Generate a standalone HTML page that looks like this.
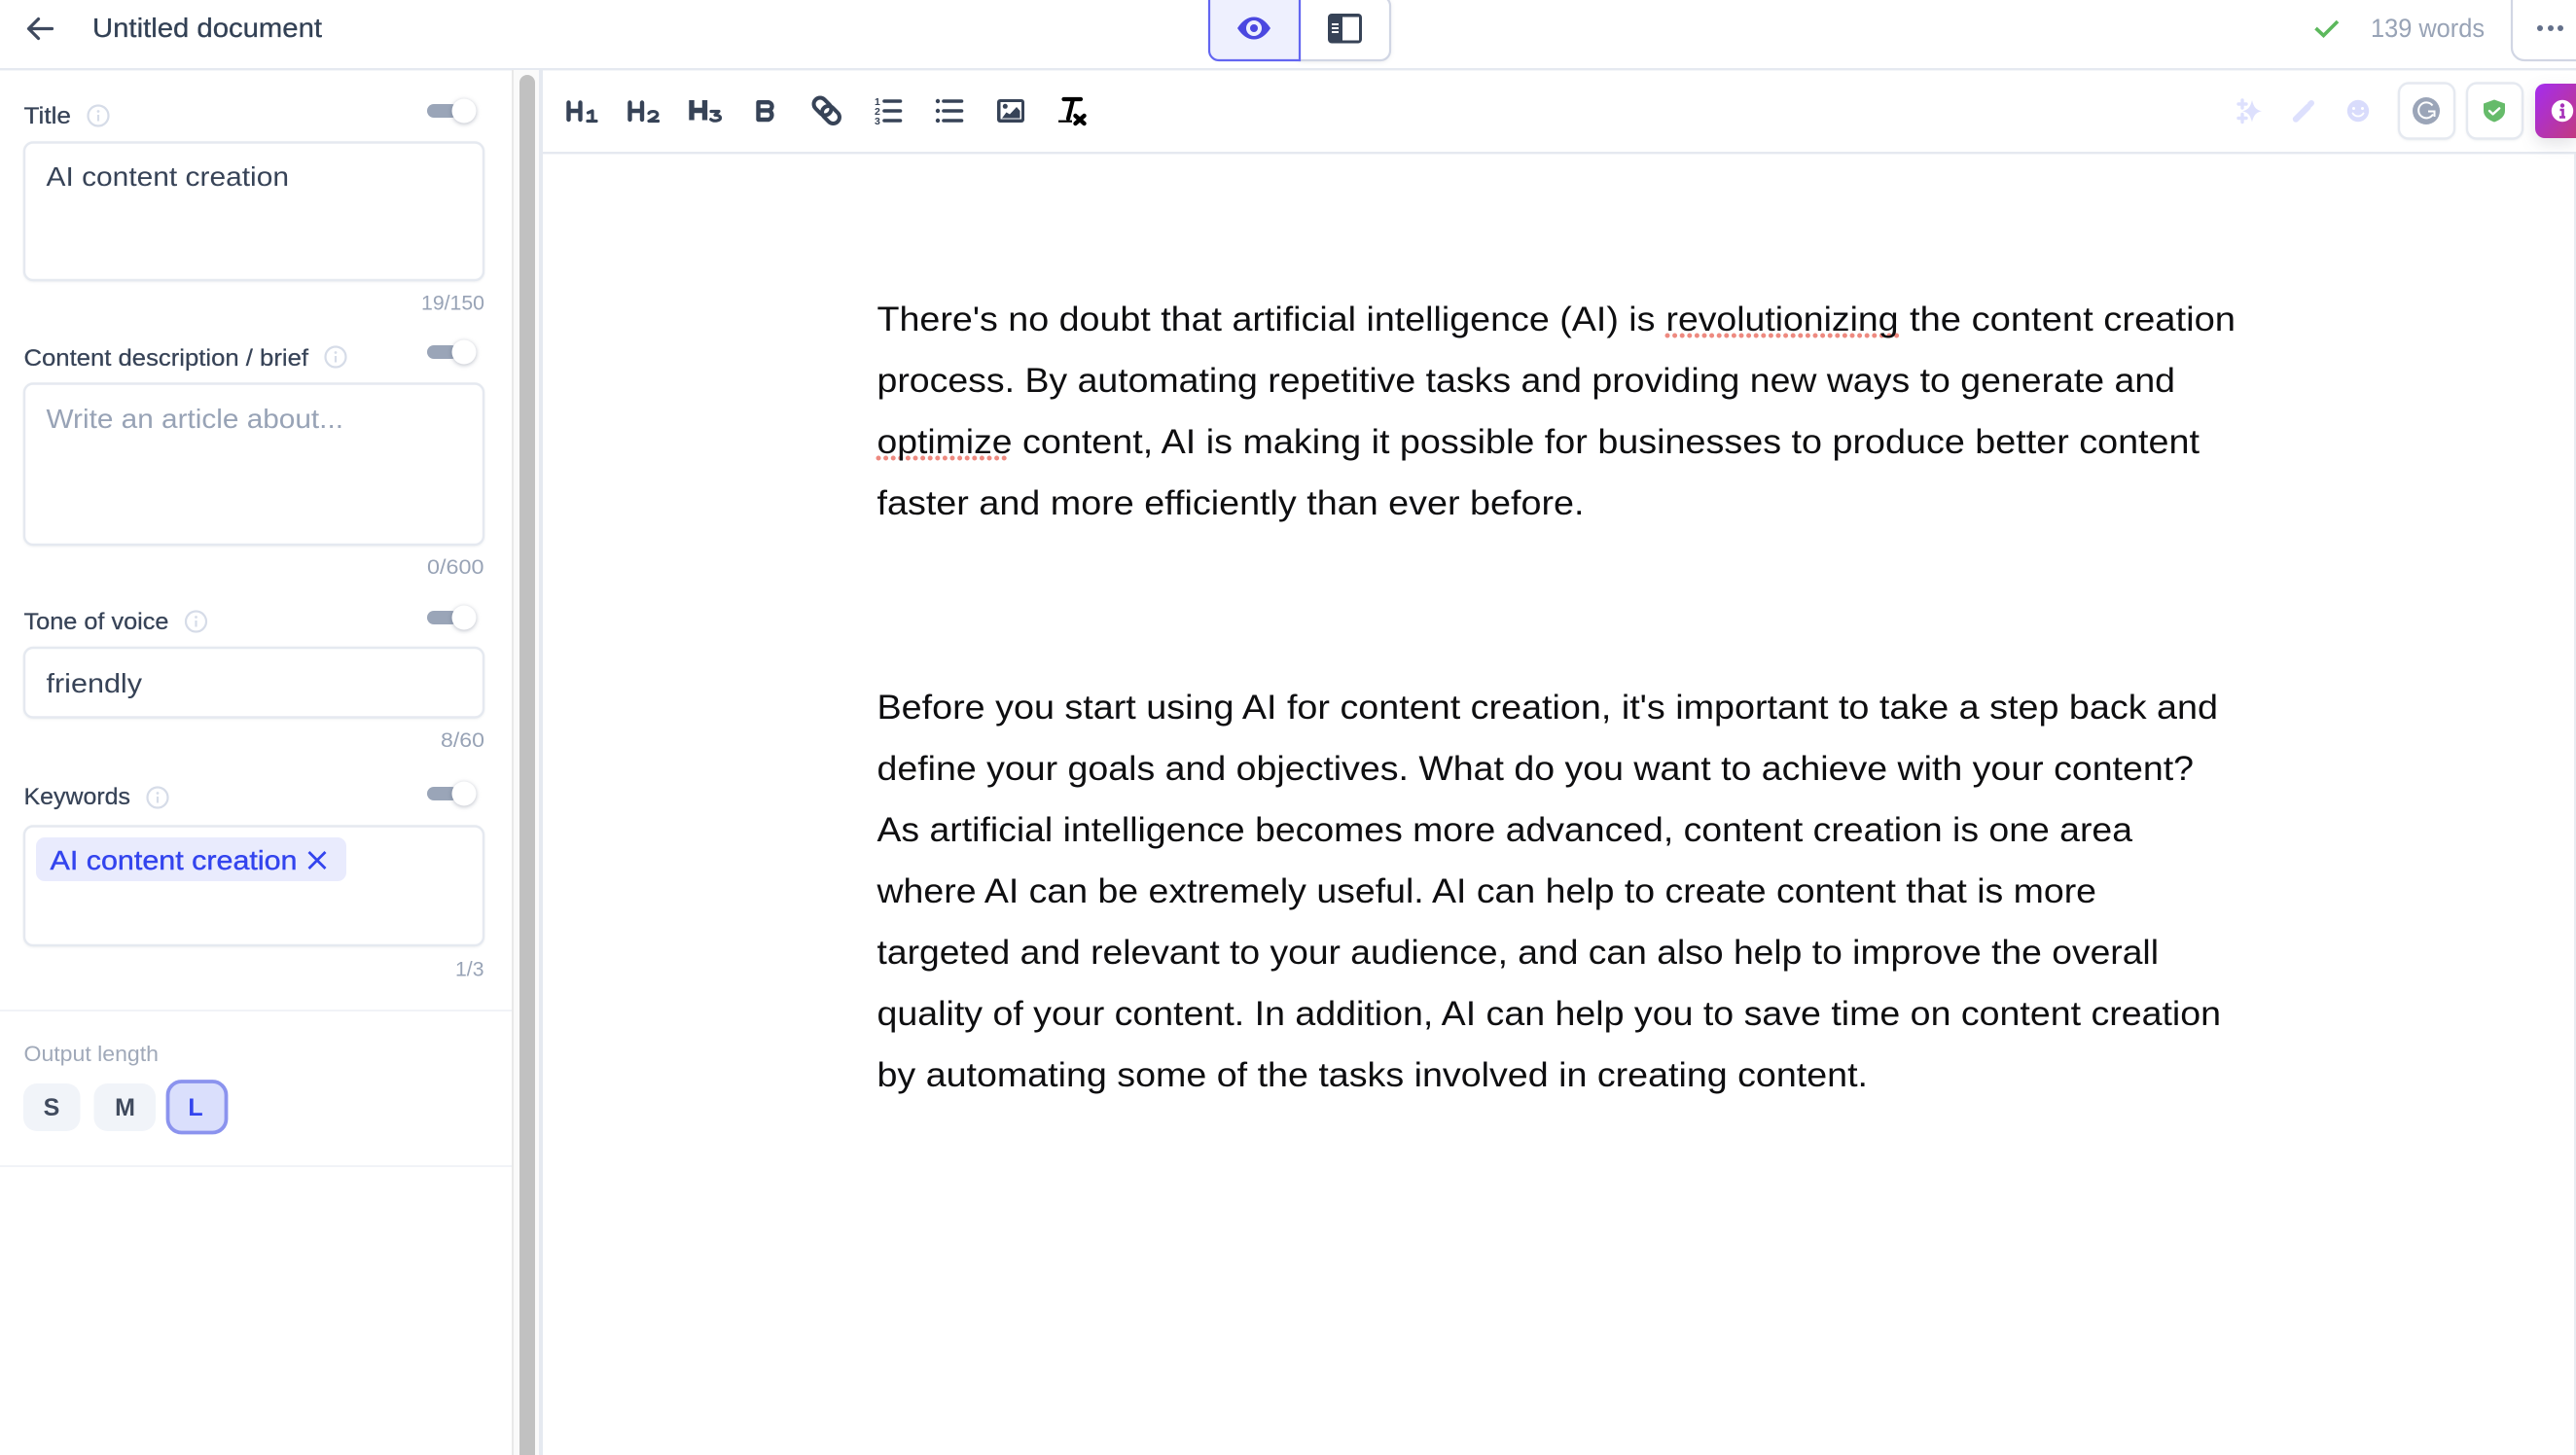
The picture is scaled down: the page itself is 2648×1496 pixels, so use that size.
<!DOCTYPE html>
<html lang="en">
<head>
<meta charset="utf-8">
<title>Untitled document</title>
<style>
html,body{margin:0;padding:0;width:2648px;height:1496px;overflow:hidden;background:#fff}
svg{display:block;position:absolute;left:0;top:0}
text{font-family:"Liberation Sans",Arial,sans-serif}
.body{font-size:35px;fill:#0e0e10}
.lab{font-size:24.5px;fill:#374357;stroke:#374357;stroke-width:.25}
.val{font-size:28px;fill:#374357}
.cnt{font-size:21px;fill:#98a3b6}
.box{fill:#fff;stroke:#e5e9f0;stroke-width:2.4;filter:drop-shadow(0 1px 1px rgba(40,50,80,.07))}
.ic{fill:none;stroke:#374357;stroke-linecap:round;stroke-linejoin:round}
.bar{fill:none;stroke:#374357;stroke-width:3.6;stroke-linecap:round}
.inf{fill:none;stroke:#d6dce8;stroke-width:2.2}
</style>
</head>
<body>
<svg width="2648" height="1496" viewBox="0 0 2648 1496" xmlns="http://www.w3.org/2000/svg">
<defs>
<linearGradient id="pg" x1="0" y1="0" x2="1" y2="1"><stop offset="0" stop-color="#a42cf0"/><stop offset="1" stop-color="#c23a80"/></linearGradient>
<g id="info"><circle r="10.5" class="inf"/><circle cy="-4.5" r="1.4" fill="#d6dce8"/><path d="M0-1v6.5" stroke="#d6dce8" stroke-width="2.2" fill="none"/></g>
<g id="tog"><rect x="439" y="-7" width="32" height="14" rx="7" fill="#9aa5b8"/><circle cx="477" r="12.5" fill="#fff" style="filter:drop-shadow(0 1.5px 2.5px rgba(50,60,90,.35))"/></g>
</defs>

<!-- header -->
<rect x="0" y="70" width="2648" height="2.4" fill="#e5e9f0"/>
<path d="M53.5 29.5H30M39.5 19.5L29.5 29.5L39.5 39.5" fill="none" stroke="#3f4a5f" stroke-width="3.2" stroke-linecap="round" stroke-linejoin="round"/>
<text x="95" y="38" font-size="28" fill="#334155" stroke="#334155" stroke-width=".3" textLength="236" lengthAdjust="spacingAndGlyphs">Untitled document</text>

<!-- view switch -->
<path d="M1336 -4H1419a10 10 0 0 1 10 10V52a10 10 0 0 1-10 10H1336Z" fill="#fff" stroke="#d1d6e4" stroke-width="2.2" style="filter:drop-shadow(0 1px 2px rgba(40,50,80,.08))"/>
<path d="M1336 -4H1243V52a10 10 0 0 0 10 10H1336Z" fill="#eef0fe" stroke="#6366f1" stroke-width="2.2"/>
<path d="M1272 29C1277 21 1283 17.500 1289 17.500C1295 17.500 1301 21 1306 29C1301 37 1295 40.500 1289 40.500C1283 40.500 1277 37 1272 29Z" fill="#4b48e0"/>
<circle cx="1289" cy="29" r="8" fill="#eef0fe"/><circle cx="1289" cy="29" r="4" fill="#4b48e0"/>
<rect x="1365" y="14" width="35" height="30.500" rx="4" fill="#374357"/>
<rect x="1380" y="17.500" width="17" height="24" fill="#fff"/>
<path d="M1369 25h7M1369 29h7M1369 33h7" stroke="#fff" stroke-width="2"/>

<!-- words -->
<path d="M2380.500 29L2388.500 36.500L2403 22" fill="none" stroke="#5cb85c" stroke-width="3.6"/>
<text x="2437" y="38" font-size="26.500" fill="#98a3b6" textLength="117" lengthAdjust="spacingAndGlyphs">139 words</text>
<rect x="2582" y="-12" width="90" height="74" rx="13" fill="#fff" stroke="#d1d6e4" stroke-width="2.2"/>
<circle cx="2611" cy="29" r="3" fill="#64708a"/><circle cx="2622" cy="29" r="3" fill="#64708a"/><circle cx="2632" cy="29" r="3" fill="#64708a"/>

<!-- sidebar structure -->
<rect x="526" y="72" width="2" height="1424" fill="#e8e8e8"/>
<rect x="528" y="72" width="26" height="1424" fill="#fafafa"/>
<path d="M534 1496V85a8 8 0 0 1 16 0V1496Z" fill="#c1c1c1"/>
<rect x="554" y="72" width="4" height="1424" fill="#e5e9f0"/>
<rect x="558" y="156" width="2090" height="2.4" fill="#e5e9f0"/>
<rect x="2646" y="158" width="2" height="1338" fill="#e8ecf2"/>

<!-- Title -->
<text x="24.500" y="127" class="lab" textLength="48.500" lengthAdjust="spacingAndGlyphs">Title</text>
<use href="#info" x="101" y="119"/>
<use href="#tog" x="0" y="114"/>
<rect x="25" y="146.500" width="472" height="141.500" rx="9" class="box"/>
<text x="47.500" y="191" class="val" textLength="249.500" lengthAdjust="spacingAndGlyphs">AI content creation</text>
<text x="433" y="318.500" class="cnt" textLength="65" lengthAdjust="spacingAndGlyphs">19/150</text>

<!-- Content description -->
<text x="24.500" y="376" class="lab" textLength="292.500" lengthAdjust="spacingAndGlyphs">Content description / brief</text>
<use href="#info" x="345" y="367"/>
<use href="#tog" x="0" y="362"/>
<rect x="25" y="394.500" width="472" height="165.500" rx="9" class="box"/>
<text x="47.500" y="440" font-size="28" fill="#98a3b6" textLength="305.500" lengthAdjust="spacingAndGlyphs">Write an article about...</text>
<text x="439" y="590" class="cnt" textLength="58.500" lengthAdjust="spacingAndGlyphs">0/600</text>

<!-- Tone -->
<text x="24.500" y="647" class="lab" textLength="149" lengthAdjust="spacingAndGlyphs">Tone of voice</text>
<use href="#info" x="201.500" y="639"/>
<use href="#tog" x="0" y="635"/>
<rect x="25" y="666" width="472" height="71.500" rx="9" class="box"/>
<text x="47.500" y="712" class="val" textLength="98.500" lengthAdjust="spacingAndGlyphs">friendly</text>
<text x="453" y="768" class="cnt" textLength="45" lengthAdjust="spacingAndGlyphs">8/60</text>

<!-- Keywords -->
<text x="24.500" y="827" class="lab" textLength="109.500" lengthAdjust="spacingAndGlyphs">Keywords</text>
<use href="#info" x="162" y="820"/>
<use href="#tog" x="0" y="816"/>
<rect x="25" y="849.500" width="472" height="122.500" rx="9" class="box"/>
<rect x="37" y="861" width="319" height="45" rx="9" fill="#e9ebfd"/>
<text x="51.500" y="894" font-size="28" fill="#3344ee" stroke="#3344ee" stroke-width=".4" textLength="254" lengthAdjust="spacingAndGlyphs">AI content creation</text>
<path d="M317.500 876L334.500 893M334.500 876L317.500 893" stroke="#3344ee" stroke-width="2.800" fill="none"/>
<text x="468" y="1003.500" class="cnt" textLength="29.500" lengthAdjust="spacingAndGlyphs">1/3</text>

<rect x="0" y="1038" width="526" height="2" fill="#f1f3f7"/>

<!-- Output length -->
<text x="24.500" y="1091" font-size="22.500" fill="#a0a9b9" textLength="138.500" lengthAdjust="spacingAndGlyphs">Output length</text>
<rect x="24" y="1114" width="58.500" height="49" rx="14" fill="#f1f4f9"/>
<text x="53" y="1147" text-anchor="middle" font-size="25" font-weight="700" fill="#414b5e">S</text>
<rect x="96.500" y="1114" width="63.500" height="49" rx="14" fill="#f1f4f9"/>
<text x="128.500" y="1147" text-anchor="middle" font-size="25" font-weight="700" fill="#414b5e">M</text>
<rect x="172.500" y="1112" width="60" height="52.500" rx="14" fill="#dadffc" stroke="#8b93ee" stroke-width="3.800"/>
<text x="201" y="1147" text-anchor="middle" font-size="25" font-weight="700" fill="#3344ee">L</text>

<rect x="0" y="1198" width="526" height="2" fill="#f1f3f7"/>

<!-- toolbar left -->
<g class="ic" stroke-width="4.400">
<path d="M584.500 105.500v17.500M596.500 105.500v17.500M584.500 114h12"/>
<path d="M647.500 105.500v17.500M660 105.500v17.500M647.500 114h12.500"/>
</g>
<g class="ic" stroke-width="3.200">
<path d="M604.500 116l4.500-2v10.500M604 124.500h9"/>
<path d="M667 116.500c1-2.500 8.500-3 8.800 1c.2 2.200-2.500 3.500-8.800 7h9.500"/>
<path d="M731 114.500h8l-4 3.800c3 0 5.500 1 5.500 3c0 2.800-6.500 4-9.800 1.400"/>
</g>
<path d="M711 103v20.500M724.500 103v20.500M711 113.500h13.500" fill="none" stroke="#374357" stroke-width="5.400"/>
<path class="ic" stroke-width="4.400" d="M779.500 105.200V123H790a5 5 0 0 0 0-9.500H779.500M790 113.500a4.200 4.200 0 0 0 0-8.300H779.500"/>
<g class="ic" stroke-width="4">
<rect x="-10" y="-6.500" width="20" height="13" rx="6.500" transform="translate(845.500 109.500) rotate(45)"/>
<rect x="-10" y="-6.500" width="20" height="13" rx="6.500" transform="translate(854 118) rotate(45)"/>
</g>
<text x="899" y="108" font-size="10.500" font-weight="700" fill="#374357">1</text>
<text x="899" y="118" font-size="10.500" font-weight="700" fill="#374357">2</text>
<text x="899" y="128" font-size="10.500" font-weight="700" fill="#374357">3</text>
<path class="bar" d="M909 104h16.500M909 114h16.500M909 124h16.500"/>
<circle cx="964" cy="104" r="2.200" fill="#374357"/><circle cx="964" cy="114" r="2.200" fill="#374357"/><circle cx="964" cy="124" r="2.200" fill="#374357"/>
<path class="bar" d="M970 104h18.500M970 114h18.500M970 124h18.500"/>
<rect x="1025" y="102" width="28" height="24" rx="3" fill="#374357"/>
<rect x="1028.500" y="105" width="21.500" height="17.500" fill="#fff"/>
<circle cx="1033.300" cy="109.300" r="2.500" fill="#374357"/>
<path d="M1030 121.500L1034.500 115.500L1038 117.500L1045 110L1048.500 114V121.500Z" fill="#374357"/>
<path d="M1093.500 102H1111M1103 102L1098 122" fill="none" stroke="#000" stroke-width="4.200" stroke-linecap="round"/>
<path d="M1088 124.700H1102" stroke="#000" stroke-width="2.200"/>
<path d="M1105.500 119L1114.500 127M1114.500 119L1105.500 127" stroke="#000" stroke-width="4.400" stroke-linecap="round"/>

<!-- toolbar right -->
<path d="M2315 103C2317 110.500 2319 112.800 2325 114.300C2319 115.800 2317 118 2315 125.500C2313 118 2311 115.800 2305 114.300C2311 112.800 2313 110.500 2315 103Z" fill="#dde0fd"/>
<path d="M2305 103v8M2301 107h8M2305 117.500v8M2301 121.500h8" stroke="#dde0fd" stroke-width="3.400" stroke-linecap="round"/>
<path d="M2360 122.500L2372.500 110" stroke="#dde0fd" stroke-width="6.400" stroke-linecap="round"/>
<path d="M2374.500 107.500L2376 106" stroke="#dde0fd" stroke-width="6" stroke-linecap="round"/>
<circle cx="2424" cy="114" r="11.200" fill="#d9dcfc"/>
<circle cx="2419.500" cy="111.500" r="1.500" fill="#fff"/><circle cx="2428.500" cy="111.500" r="1.500" fill="#fff"/>
<path d="M2418.500 116.500c2.500 4 8.500 4 11 0" stroke="#fff" stroke-width="1.800" fill="none" stroke-linecap="round"/>

<rect x="2466" y="85.500" width="57" height="57" rx="10" class="box"/>
<circle cx="2494" cy="114" r="14" fill="#9ba5b8"/>
<path d="M2500.500 108.500a8 8 0 1 0 .5 9M2496 114.500h6.500v5.500" fill="none" stroke="#fff" stroke-width="2"/>
<rect x="2536" y="85.500" width="57" height="57" rx="10" class="box"/>
<path d="M2564 102.500L2575 106.500V114C2575 119.500 2570 123.500 2564 125.500C2558 123.500 2553 119.500 2553 114V106.500Z" fill="#66bb6a"/>
<path d="M2559 114l3.600 3.400l6.600-6" stroke="#fff" stroke-width="2.400" fill="none" stroke-linecap="round" stroke-linejoin="round"/>

<path d="M2648 86H2616a10 10 0 0 0-10 10V132a10 10 0 0 0 10 10H2648Z" fill="url(#pg)" style="filter:drop-shadow(0 6px 8px rgba(60,60,80,.14))"/>
<circle cx="2634" cy="114" r="11.200" fill="#fff"/>
<circle cx="2634" cy="108.500" r="2.200" fill="#a52fb8"/>
<path d="M2631.500 113h3v7M2631 120.500h6" stroke="#a52fb8" stroke-width="2.600" fill="none"/>

<!-- spellcheck dots -->
<path d="M1714 345H1951" stroke="#ee8a80" stroke-width="5" stroke-linecap="round" stroke-dasharray="0 7.600" fill="none"/>
<path d="M903 471H1034" stroke="#ee8a80" stroke-width="5" stroke-linecap="round" stroke-dasharray="0 7.600" fill="none"/>

<!-- body -->
<text x="901.500" y="340" class="body" textLength="800" lengthAdjust="spacingAndGlyphs">There's no doubt that artificial intelligence (AI) is</text>
<text x="1712.500" y="340" class="body" textLength="239" lengthAdjust="spacingAndGlyphs">revolutionizing</text>
<text x="1963" y="340" class="body" textLength="335" lengthAdjust="spacingAndGlyphs">the content creation</text>
<text x="901.500" y="403" class="body" textLength="1334.500" lengthAdjust="spacingAndGlyphs">process. By automating repetitive tasks and providing new ways to generate and</text>
<text x="901.500" y="466" class="body" textLength="139" lengthAdjust="spacingAndGlyphs">optimize</text>
<text x="1051" y="466" class="body" textLength="1210" lengthAdjust="spacingAndGlyphs">content, AI is making it possible for businesses to produce better content</text>
<text x="901.500" y="529" class="body" textLength="727" lengthAdjust="spacingAndGlyphs">faster and more efficiently than ever before.</text>

<text x="901.500" y="739" class="body" textLength="1378.500" lengthAdjust="spacingAndGlyphs">Before you start using AI for content creation, it's important to take a step back and</text>
<text x="901.500" y="802" class="body" textLength="1353.500" lengthAdjust="spacingAndGlyphs">define your goals and objectives. What do you want to achieve with your content?</text>
<text x="901.500" y="865" class="body" textLength="1290.500" lengthAdjust="spacingAndGlyphs">As artificial intelligence becomes more advanced, content creation is one area</text>
<text x="901.500" y="928" class="body" textLength="1253.500" lengthAdjust="spacingAndGlyphs">where AI can be extremely useful. AI can help to create content that is more</text>
<text x="901.500" y="991" class="body" textLength="1317.500" lengthAdjust="spacingAndGlyphs">targeted and relevant to your audience, and can also help to improve the overall</text>
<text x="901.500" y="1054" class="body" textLength="1381.500" lengthAdjust="spacingAndGlyphs">quality of your content. In addition, AI can help you to save time on content creation</text>
<text x="901.500" y="1117" class="body" textLength="1018.500" lengthAdjust="spacingAndGlyphs">by automating some of the tasks involved in creating content.</text>
</svg>
</body>
</html>
